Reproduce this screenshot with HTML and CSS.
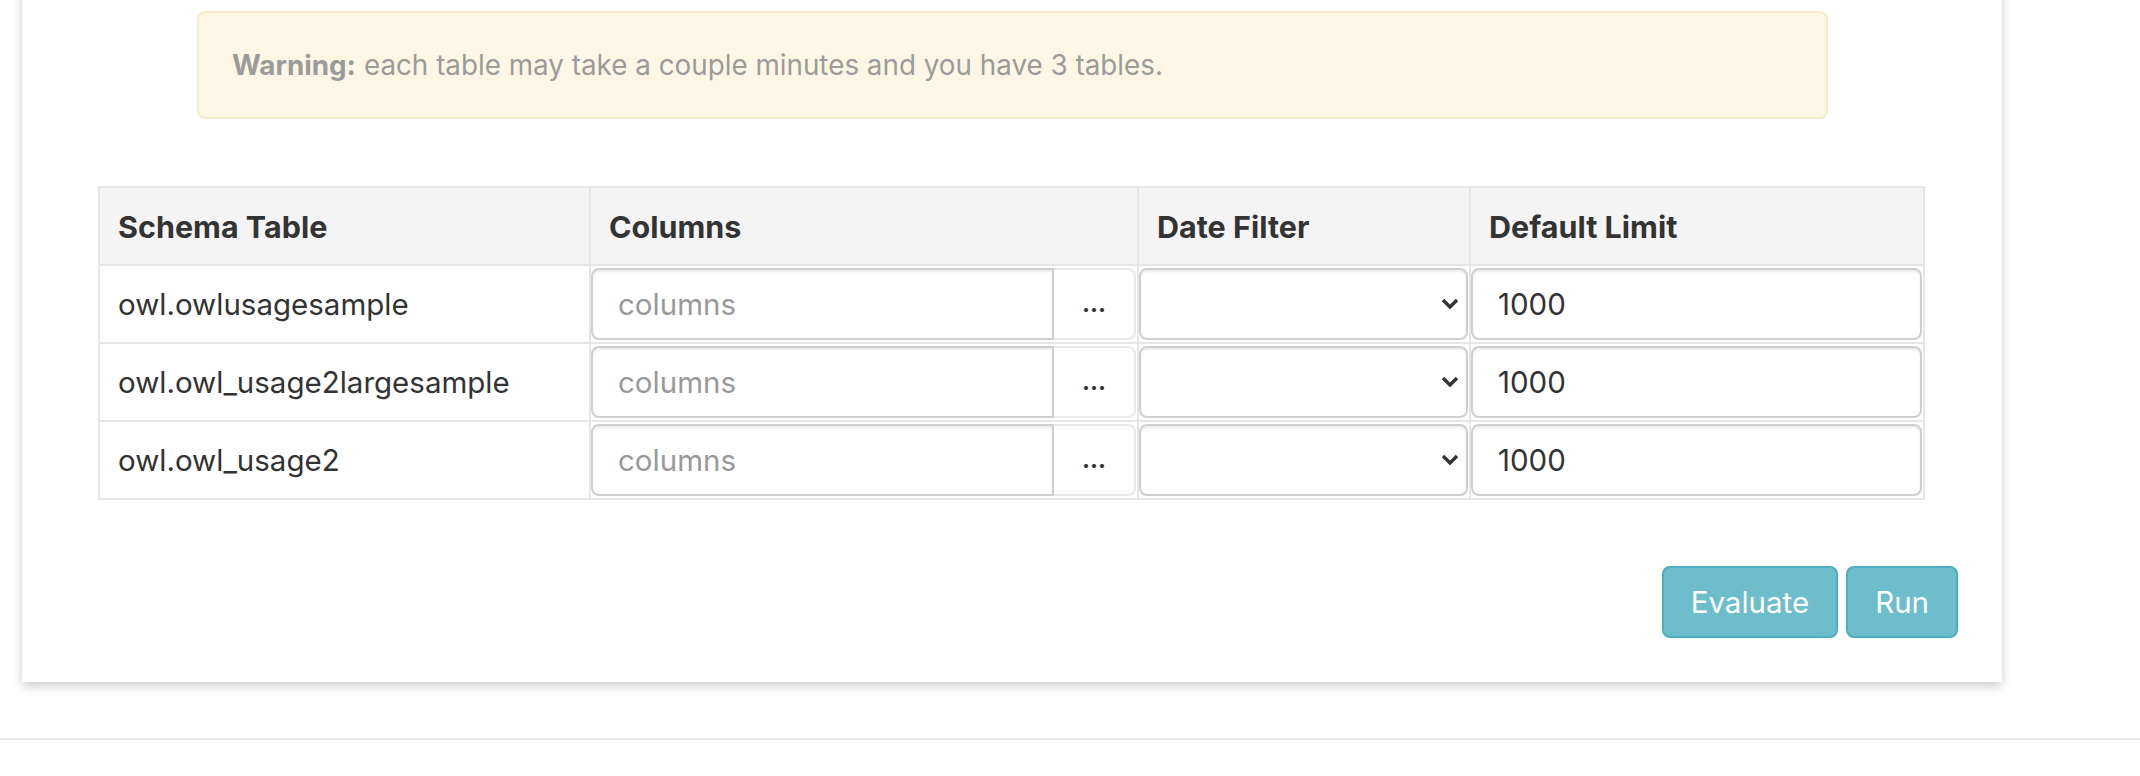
FILE: index.html
```html
<!DOCTYPE html>
<html lang="en">
<head>
<meta charset="utf-8">
<title>Schema tables</title>
<link rel="stylesheet" href="styles.css">
</head>
<body>
<main class="page">
  <section class="card">
    <div class="alert"><strong>Warning:</strong> each table may take a couple minutes and you have 3 tables.</div>
    <table class="grid">
      <colgroup><col class="c1"><col class="c2"><col class="c3"><col class="c4"></colgroup>
      <thead>
        <tr><th>Schema Table</th><th>Columns</th><th>Date Filter</th><th>Default Limit</th></tr>
      </thead>
      <tbody>
        <tr>
          <td class="name">owl.owlusagesample</td>
          <td class="ctl"><div class="group"><input class="field field-cols" placeholder="columns"><button class="dots" type="button">...</button></div></td>
          <td class="ctl"><div class="select"><select class="field field-select"><option></option></select><svg class="chev" viewBox="0 0 18 11" width="18" height="11"><polyline points="2,2 9,9 16,2" fill="none" stroke="#333" stroke-width="3.4"/></svg></div></td>
          <td class="ctl"><input class="field" value="1000"></td>
        </tr>
        <tr>
          <td class="name">owl.owl_usage2largesample</td>
          <td class="ctl"><div class="group"><input class="field field-cols" placeholder="columns"><button class="dots" type="button">...</button></div></td>
          <td class="ctl"><div class="select"><select class="field field-select"><option></option></select><svg class="chev" viewBox="0 0 18 11" width="18" height="11"><polyline points="2,2 9,9 16,2" fill="none" stroke="#333" stroke-width="3.4"/></svg></div></td>
          <td class="ctl"><input class="field" value="1000"></td>
        </tr>
        <tr>
          <td class="name">owl.owl_usage2</td>
          <td class="ctl"><div class="group"><input class="field field-cols" placeholder="columns"><button class="dots" type="button">...</button></div></td>
          <td class="ctl"><div class="select"><select class="field field-select"><option></option></select><svg class="chev" viewBox="0 0 18 11" width="18" height="11"><polyline points="2,2 9,9 16,2" fill="none" stroke="#333" stroke-width="3.4"/></svg></div></td>
          <td class="ctl"><input class="field" value="1000"></td>
        </tr>
      </tbody>
    </table>
    <div class="actions">
      <button class="btn" type="button">Evaluate</button>
      <button class="btn" type="button">Run</button>
    </div>
  </section>
  <footer class="footer"></footer>
</main>
</body>
</html>
```

FILE: styles.css
```css
* { box-sizing: border-box; }

html, body {
  margin: 0;
  padding: 0;
  background: #fff;
  overflow: hidden;
}

body {
  font-family: "Inter", "Liberation Sans", sans-serif;
  font-size: 29.5px;
  color: #333;
}

.page {
  width: 2140px;
  height: 776px;
}

.card {
  width: 1980px;
  margin: -20px 0 0 22px;
  padding: 31px 44px 44px 76px;
  background: #fff;
  box-shadow: 0 4px 10px rgba(0, 0, 0, 0.2);
}

.alert {
  width: 1631px;
  height: 108px;
  margin-left: 99px;
  padding: 0 33px;
  display: flex;
  align-items: center;
  background: #fbf7e4;
  border: 2px solid #f5eacb;
  border-radius: 8px;
  color: #9b9b9b;
  font-size: 27.8px;
}

.alert strong { font-weight: 700; margin-right: 8px; }

.grid {
  margin-top: 67px;
  width: 1825px;
  table-layout: fixed;
  border-collapse: collapse;
}

.c1 { width: 491px; }
.c2 { width: 548px; }
.c3 { width: 332px; }
.c4 { width: 454px; }

.grid th,
.grid td {
  border: 2px solid #e6e6e6;
  vertical-align: middle;
  text-align: left;
}

.grid th {
  background: #f4f4f4;
  font-weight: 700;
  font-size: 30.5px;
  padding: 0 18px;
  height: 78px;
  color: #333;
}

.grid td.name {
  padding: 0 18px;
  height: 78px;
  color: #333;
}

.grid td.ctl {
  padding: 2px 1px 2px 0;
  height: 78px;
}

.field {
  display: block;
  width: 100%;
  height: 72px;
  padding: 0 25px;
  font: inherit;
  color: #333;
  background: #fff;
  border: 2px solid #cfcfcf;
  border-radius: 8px;
  box-shadow: inset 0 2px 2px rgba(0, 0, 0, 0.075);
  outline: none;
}

.field::placeholder { color: #999; }

.group { display: flex; }

.field-cols {
  flex: 1;
  min-width: 0;
  border-radius: 8px 0 0 8px;
}

.dots {
  width: 82px;
  height: 72px;
  flex: none;
  border: 2px solid #e9e9e9;
  border-left: 0;
  border-radius: 0 8px 8px 0;
  background: #fff;
  color: #333;
  font-family: "Inter", "Liberation Sans", sans-serif;
  font-size: 24px;
  font-weight: 700;
  padding: 0;
  line-height: 1;
}

.select { position: relative; }

.field-select {
  appearance: none;
  -webkit-appearance: none;
}

.chev {
  position: absolute;
  right: 9px;
  top: 50%;
  margin-top: -6px;
  pointer-events: none;
}

.actions {
  margin-top: 66px;
  display: flex;
  justify-content: flex-end;
  gap: 8px;
}

.btn {
  height: 72px;
  padding: 0 27px;
  font: inherit;
  color: #fff;
  background: #6dbdcb;
  border: 2px solid #4eaec2;
  border-radius: 8px;
}

.footer {
  margin-top: 56px;
  border-top: 2px solid #e8e8e8;
}
```
